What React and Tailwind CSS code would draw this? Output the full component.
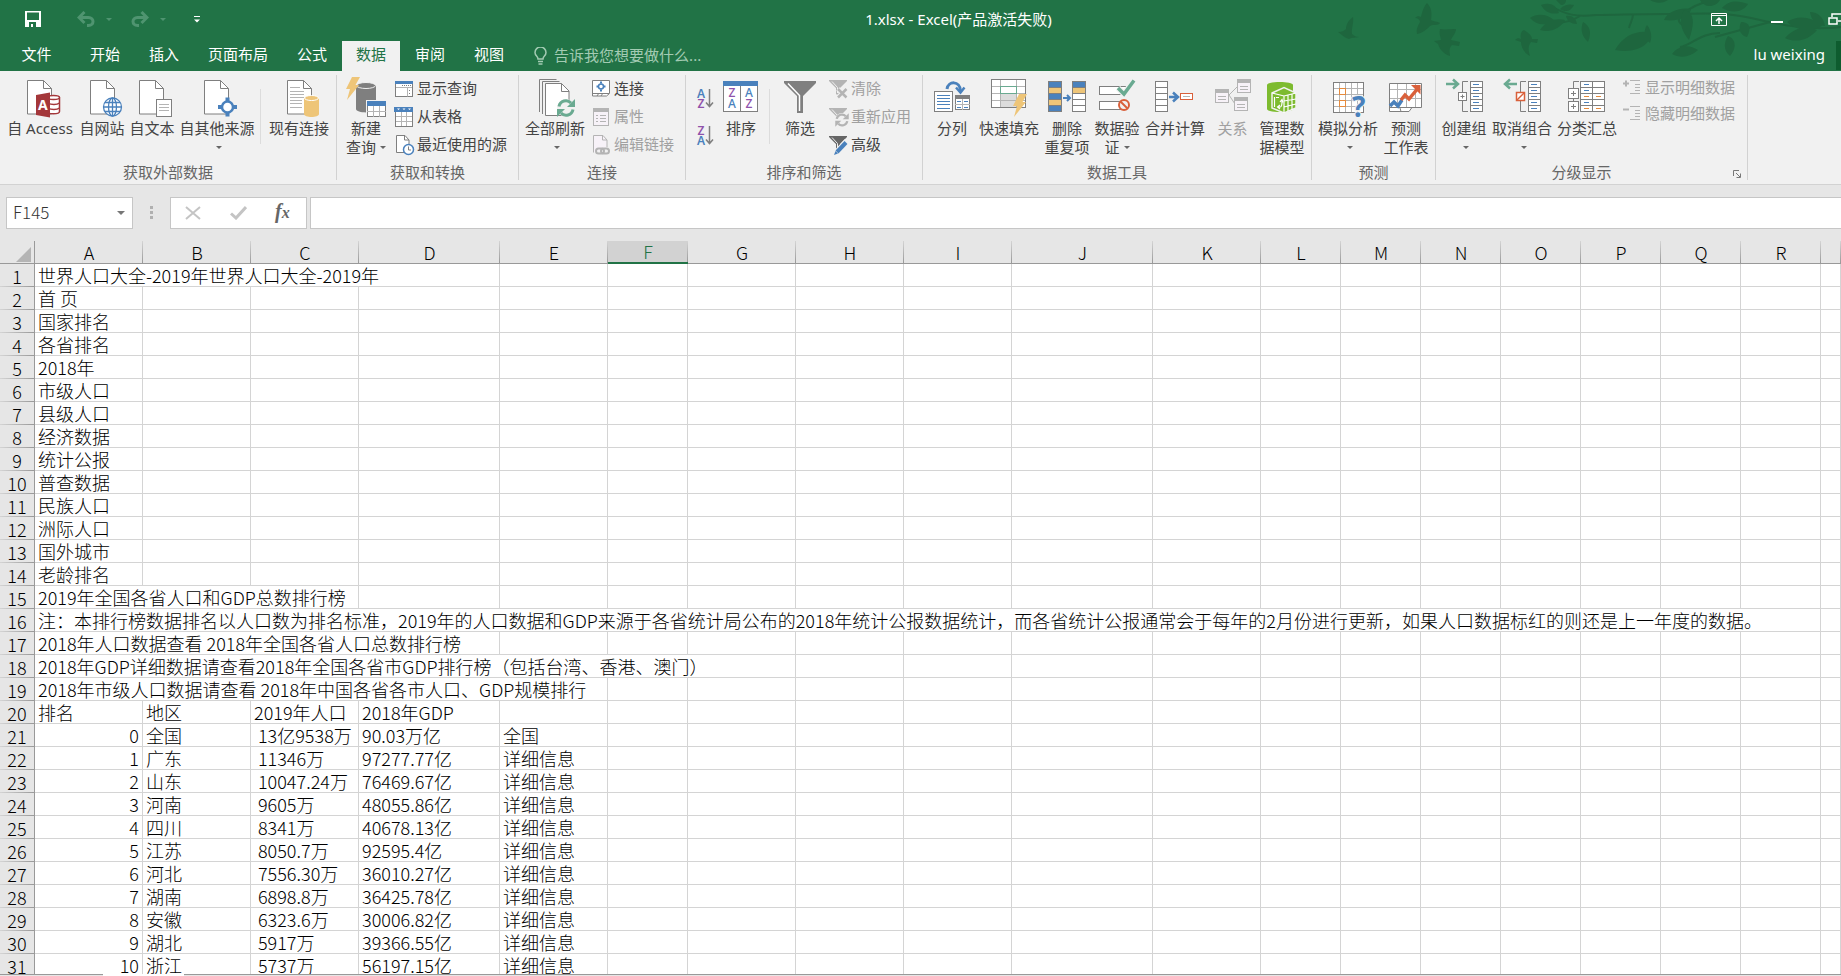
import { clsx } from "clsx";

const GRAY = "#7f7f7f";
const BLUE = "#4a81bc";
const YELLOW = "#eec578";
const RED = "#d9603b";
const TEAL = "#6aaa91";
const PALE = "#b4b4b4";

/* ---------- shared icon parts ---------- */

function Big({ children }) {
	return (
		<svg width="40" height="38" viewBox="0 0 40 38" className="overflow-visible" fill="none" stroke={GRAY} aria-hidden="true">
			{children}
		</svg>
	);
}

function Small({ children, color = GRAY }) {
	return (
		<svg width="18" height="20" viewBox="0 0 18 20" className="shrink-0 overflow-visible" fill="none" stroke={color} aria-hidden="true">
			{children}
		</svg>
	);
}

function Page({ x = 7, y = 1 }) {
	return (
		<g transform={`translate(${x} ${y})`}>
			<path d="M.5.5h16l8 8v25.500H.5z" fill="#fff" />
			<path d="M16.500.5v8h8" />
		</g>
	);
}

function Bolt({ x, y }) {
	return (
		<path
			transform={`translate(${x} ${y})`}
			d="M6 0h8L9.500 8H13L1 23l3-11H0z"
			fill={YELLOW}
			stroke="none"
		/>
	);
}

function Refresh({ x, y, s = 1, color = TEAL }) {
	return (
		<g transform={`translate(${x} ${y}) scale(${s})`} stroke={color} strokeWidth="3">
			<path d="M-7-1.500A7 7 0 0 1 5-5" />
			<path d="M7 1.500A7 7 0 0 1-5 5" />
			<path d="M9-9v8H1z" fill={color} stroke="none" />
			<path d="M-9 9V1h8z" fill={color} stroke="none" />
		</g>
	);
}

function Rows({ x, y = 2.5, w, fills }) {
	return fills.map((fill, i) => (
		<rect key={i} x={x} y={y + i * 6} width={w} height="6" fill={fill} strokeWidth="1" />
	));
}

function Arrow({ x, y, color = BLUE, flip = false, w = 10 }) {
	return (
		<path
			transform={`translate(${x} ${y})${flip ? " scale(-1 1)" : ""}`}
			d={`M0 0H${w - 1}M${w - 6}-4.500L${w - 1} 0l-5 4.500`}
			stroke={color}
			strokeWidth="2.500"
		/>
	);
}

function Caret({ className }) {
	return (
		<svg width="6" height="3" viewBox="0 0 6 3" className={clsx("inline-block", className)} aria-hidden="true">
			<path d="M0 0h6L3 3z" fill="currentColor" />
		</svg>
	);
}

/* ---------- large ribbon icons ---------- */

const AccessIcon = () => (
	<Big>
		<Page />
		<path d="M27 18.500v14c0 3 12.500 3 12.500 0v-14" fill="#fff" stroke="#a4373a" strokeWidth="1.500" />
		<ellipse cx="33.500" cy="18.500" rx="6" ry="2" fill="#fff" stroke="#a4373a" strokeWidth="1.500" />
		<path d="M28 24c3 2 9 2 11.500 0M28 29c3 2 9 2 11.500 0" stroke="#a4373a" strokeWidth="1.500" />
		<path d="M16 16l14-2.500v25L16 36z" fill="#a4373a" stroke="none" />
		<text x="18" y="31" fontSize="14" fontWeight="700" fontFamily="Noto Sans" fill="#fff" stroke="none">A</text>
	</Big>
);

const WebIcon = () => (
	<Big>
		<Page x={8} />
		<g stroke={BLUE} strokeWidth="1.300">
			<circle cx="30.500" cy="28" r="9" fill="#fff" />
			<ellipse cx="30.500" cy="28" rx="4" ry="9" />
			<path d="M30.500 19v18M21.500 28h18M23 23.500h15M23 32.500h15" />
		</g>
	</Big>
);

const TextIcon = () => (
	<Big>
		<Page />
		<rect x="24.500" y="20.500" width="15" height="17" fill="#fff" />
		<path d="M27 25.500h10M27 28.500h10M27 31.500h10" stroke={PALE} />
	</Big>
);

const SourcesIcon = () => (
	<Big>
		<Page />
		<path d="M30.500 18.500v19M21 28h19" stroke={BLUE} strokeWidth="4" />
		<circle cx="30.500" cy="28" r="5.500" fill="#fff" stroke={BLUE} strokeWidth="2.500" />
	</Big>
);

const ConnectionsIcon = () => (
	<Big>
		<Page x={8} />
		<path d="M11 8.500h10M11 12.500h14M11 15.500h14M11 18.500h14M11 21.500h12M11 24.500h12M11 28.500h12" stroke={PALE} />
		<path d="M25 19v16c0 4 15 4 15 0V19z" fill={YELLOW} stroke="none" />
		<ellipse cx="32.500" cy="19" rx="7" ry="2.500" fill={YELLOW} stroke="#fff" />
	</Big>
);

const NewQueryIcon = () => (
	<Big>
		<path d="M10 6v24c0 4.500 20 4.500 20 0V6z" fill={GRAY} stroke="none" />
		<ellipse cx="20" cy="6.500" rx="9.500" ry="3" fill={GRAY} stroke="#f1f1f1" />
		<Bolt x={0} y={-2} />
		<rect x="20" y="21" width="21" height="18" fill="#f1f1f1" stroke="none" />
		<rect x="21.500" y="22.500" width="18" height="15" fill="#fff" />
		<rect x="21" y="22" width="19" height="5" fill={BLUE} stroke="none" />
		<path d="M27.500 27v11M33.500 27v11M21 32.500h19" stroke={PALE} />
	</Big>
);

const RefreshAllIcon = () => (
	<Big>
		<path d="M4.500 33V.5h17M7.500 35V2.500h17" />
		<path d="M10.500 4.500h16l7.500 7.500v24.500H10.500z" fill="#fff" />
		<path d="M26.500 4.500v8H34" />
		<circle cx="31" cy="29" r="9" fill="#f1f1f1" stroke="none" />
		<Refresh x={31} y={29} />
	</Big>
);

const SortIcon = () => (
	<Big>
		<rect x="2.500" y="2.500" width="34" height="30" fill="#fff" />
		<rect x="2" y="2" width="35" height="5" fill={BLUE} stroke="none" />
		<path d="M19.500 7v26" />
		<g fontSize="12" fontWeight="500" fontFamily="Noto Sans" stroke="none" textAnchor="middle">
			<text x="11" y="18" fill="#8f52ab">Z</text>
			<text x="11" y="29" fill={BLUE}>A</text>
			<text x="28" y="18" fill={BLUE}>A</text>
			<text x="28" y="29" fill="#8f52ab">Z</text>
		</g>
	</Big>
);

const FilterIcon = () => (
	<Big>
		<path d="M4 2h32v2L23 17v17h-6V17L4 4z" fill={GRAY} stroke="none" />
		<path d="M8 4.500l11.500 12V32" stroke="#fff" strokeWidth="1.500" />
	</Big>
);

const ColumnsIcon = () => (
	<Big>
		<rect x="2.500" y="12.500" width="18" height="20" fill="#fff" />
		<path d="M5 16.500h13M5 19.500h13M5 22.500h13M5 25.500h13M5 29.500h13" stroke={BLUE} />
		<rect x="23.500" y="16.500" width="14" height="14" fill="#fff" />
		<rect x="23" y="16" width="15" height="4" fill={GRAY} stroke="none" />
		<path d="M30.500 20v11M23 25.500h15" stroke={PALE} />
		<path d="M25 22.500h4M32 22.500h4M25 28.500h4M32 28.500h4" stroke={BLUE} />
		<path d="M15 10c1-8 13-9 13.500 2" stroke={BLUE} strokeWidth="3" />
		<path d="M24 8.500l4.500 5 4-5" stroke={BLUE} strokeWidth="2.500" />
	</Big>
);

const FlashFillIcon = () => (
	<Big>
		<rect x="2.500" y=".5" width="34" height="28" fill="#fff" />
		<rect x="12" y="15" width="15" height="13" fill="#dcdcdc" stroke="none" />
		<path d="M11.500 1v27M27.500 1v27M3 7.500h33M3 14.500h33M3 21.500h33" stroke={PALE} />
		<rect x="11.500" y="7.500" width="16" height="7" fill="#fff" stroke={TEAL} />
		<Bolt x={24} y={15} />
	</Big>
);

const DedupeIcon = () => (
	<Big>
		<Rows x={1.5} w={13} fills={[BLUE, YELLOW, BLUE, YELLOW, BLUE]} />
		<Rows x={25.5} w={13} fills={[BLUE, YELLOW, "#fff", "#fff", "#fff"]} />
		<path d="M16 19h7M20 16l3 3-3 3" stroke={BLUE} strokeWidth="2" />
	</Big>
);

const ValidateIcon = () => (
	<Big>
		<rect x="2.500" y="7.500" width="27" height="8" fill="#fff" />
		<rect x="2.500" y="22.500" width="27" height="8" fill="#fff" />
		<path d="M21 9l6 6L37 1.500" stroke="#f1f1f1" strokeWidth="6" />
		<path d="M21 9l6 6L37 1.500" stroke={TEAL} strokeWidth="3.500" />
		<circle cx="27" cy="26" r="5" fill="#f1f1f1" stroke={RED} strokeWidth="2" />
		<path d="M23.500 22.500l7 7" stroke={RED} strokeWidth="2" />
	</Big>
);

const ConsolidateIcon = () => (
	<Big>
		<Rows x={0.5} w={12} fills={["#fff", "#fff", "#fff", "#fff", "#fff"]} />
		<Arrow x={14} y={18} />
		<rect x="25.500" y="14.500" width="12" height="6" fill="#fff" stroke={RED} />
		<path d="M28 17.500h7" stroke={PALE} />
	</Big>
);

function PaleTable({ x, y }) {
	return (
		<g transform={`translate(${x} ${y})`} stroke={PALE}>
			<rect x=".5" y=".5" width="13" height="13" fill="#f7f2f8" />
			<path d="M0 2h14" strokeWidth="4" />
			<path d="M3 7.500h8M3 10.500h8" />
		</g>
	);
}

const RelationsIcon = () => (
	<Big>
		<path d="M16 16l9-9M16 16l6 9" stroke={PALE} />
		<PaleTable x={2} y={10} />
		<PaleTable x={24} y={0} />
		<PaleTable x={21} y={18} />
	</Big>
);

const DataModelIcon = () => (
	<Big>
		<path d="M5 6c0-4 26-4 26 0v24c0 4-26 4-26 0z" fill="#7dbb2f" stroke="none" />
		<path d="M10 14l12-5.500L34 14v15l-12 5-12-5z" fill="#7dbb2f" stroke="#f1f1f1" strokeWidth="1.500" />
		<path d="M22 17v17M10 14l12 3 12-3M26 16v16M30 15v16M22 22l12-2M22 28l12-3" stroke="#fff" strokeWidth="1.200" />
		<path d="M12.500 18v10M16 28c4 1 4-2 4-6M18 23l2-2.500 1 3M18 26l-2.500 2 2.500 2M14 18.500h3" stroke="#fff" strokeWidth="1.200" />
	</Big>
);

const WhatIfIcon = () => (
	<Big>
		<rect x="5.500" y="3.500" width="30" height="30" fill="#fff" />
		<path d="M11.500 4v29M17.500 4v29M23.500 4v29M29.500 4v29M6 9.500h29M6 15.500h29M6 21.500h29M6 27.500h29" stroke={PALE} />
		<rect x="11.500" y="9.500" width="6" height="6" fill="#fff" stroke="#e58a3c" />
		<rect x="11.500" y="21.500" width="6" height="6" fill="#fff" stroke="#e58a3c" />
		<text x="24" y="38" fontSize="28" fontWeight="700" fontFamily="Noto Sans" fill={BLUE} stroke="#f1f1f1" strokeWidth="2" paintOrder="stroke">?</text>
	</Big>
);

const ForecastIcon = () => (
	<Big>
		<path d="M3.500 4.500h32v24H26l-3 4H3.500z" fill="#fff" />
		<path d="M11.500 5v23M20.500 5v23M29.500 5v23M4 10.500h31M4 19.500h31" stroke={PALE} />
		<path d="M4 28.500h22M14 29l1 3.500h8" />
		<path d="M4 27l4-4 4 4 4-6" stroke={BLUE} strokeWidth="3.500" />
		<path d="M15 21l4-5 4 4L33 8" stroke={RED} strokeWidth="3.500" />
		<path d="M25 6h9.500v9.500z" fill={RED} stroke="none" />
	</Big>
);

function OutlineTable({ x, cols = 1 }) {
	return (
		<>
			<Rows x={x} w={12} fills={["#fff", "#fff", "#fff", "#fff", "#fff"]} />
			{cols === 2 && <Rows x={x + 12} w={12} fills={["#fff", "#fff", "#fff", "#fff", "#fff"]} />}
		</>
	);
}

const dashes = "M29 5.500h6M29 11.500h6M29 17.500h6M29 23.500h6M29 29.500h6";

const GroupIcon = () => (
	<Big>
		<path d="M24 2.500h-5.500v30H24" />
		<rect x="14.500" y="13.500" width="8" height="8" fill="#fff" />
		<path d="M16.500 17.500h4M18.500 15.500v4" />
		<OutlineTable x={26.5} />
		<path d={dashes} stroke={BLUE} />
		<Arrow x={2} y={5} w={13} color={TEAL} />
	</Big>
);

const UngroupIcon = () => (
	<Big>
		<path d="M24 2.500h-5.500v30H24" />
		<rect x="14.500" y="13.500" width="8" height="8" fill="#fff" stroke={RED} strokeWidth="1.500" />
		<path d="M15 21l7-7" stroke={RED} strokeWidth="1.500" />
		<OutlineTable x={26.5} />
		<path d={dashes} stroke={BLUE} />
		<Arrow x={15} y={5} w={13} color={TEAL} flip />
	</Big>
);

const SubtotalIcon = () => (
	<Big>
		<path d="M12 2.500H6.500V10M6.500 19v4" />
		<rect x="1.500" y="9.500" width="10" height="10" fill="#fff" />
		<rect x="1.500" y="22.500" width="10" height="10" fill="#fff" />
		<path d="M4 14.500h5M6.500 12v5M4 27.500h5M6.500 25v5" />
		<OutlineTable x={13.5} cols={2} />
		<path d="M17 5.500h5M17 11.500h5M17 23.500h5" stroke={BLUE} />
		<path d="M17 17.500h5M29 17.500h5M17 29.500h5M29 29.500h5" stroke="#e58a3c" />
	</Big>
);

/* ---------- small ribbon icons ---------- */

const ShowQueriesIcon = () => (
	<Small>
		<rect x=".5" y="2.500" width="17" height="15" fill="#fff" />
		<rect x="0" y="2" width="18" height="3" fill={BLUE} stroke="none" />
		<path d="M12.500 8.500v9M1 8.500h16" stroke={PALE} />
		<path d="M14 11.500h2M14 14.500h2M7 6.500h9" strokeDasharray="1 1" />
	</Small>
);

const FromTableIcon = () => (
	<Small>
		<rect x=".5" y=".5" width="17" height="19" fill="#fff" />
		<rect x="-1" y="0" width="19" height="5" fill={BLUE} stroke="none" />
		<path d="M2 1.500h3L3.500 3zM7.500 1.500h3L9 3zM13 1.500h3L14.500 3z" fill="#fff" stroke="none" />
		<path d="M6.500 5v14M11.500 5v14M1 9.500h16M1 14.500h16" stroke={PALE} />
	</Small>
);

const RecentIcon = () => (
	<Small>
		<path d="M1.500.5H10l4 4.500v12.500H1.500z" fill="#fff" />
		<path d="M9.500.5V5H14" />
		<circle cx="13.500" cy="14.500" r="5" fill="#fff" stroke={BLUE} strokeWidth="1.500" />
		<path d="M13.500 11.500v3.500H16" stroke={GRAY} />
	</Small>
);

const LinkIcon = () => (
	<Small>
		<path d="M.5 1.500h17v13l-3 2.500H.5z" fill="#fff" />
		<path d="M1 14.500h16M5 17l2-3M9 17l2-3" />
		<circle cx="9" cy="7.500" r="2.500" stroke={BLUE} strokeWidth="1.500" />
		<path d="M9 2.500v2M9 10.500v2M4.500 7.500h2M11.500 7.500h2" stroke={BLUE} strokeWidth="2" />
	</Small>
);

const PropsIcon = () => (
	<Small color={PALE}>
		<rect x="1.500" y="1.500" width="15" height="17" fill="#f7f2f8" />
		<path d="M1 3h16" strokeWidth="4" />
		<path d="M4 8.500h2M8 8.500h6M4 11.500h2M8 11.500h6M4 14.500h2M8 14.500h6" />
	</Small>
);

const EditLinksIcon = () => (
	<Small color={PALE}>
		<path d="M1.500 17.500V.5H11l4 4.500v7" fill="#f7f2f8" />
		<path d="M10.500.5V5H15" />
		<rect x="4" y="13.500" width="8" height="5" rx="2.500" strokeWidth="2" />
		<rect x="9" y="13.500" width="8" height="5" rx="2.500" strokeWidth="2" />
	</Small>
);

function MiniFunnel({ color }) {
	return (
		<>
			<path d="M0 1h18v1l-7 7v9l-4-3V9L0 2z" fill={color} stroke="none" />
			<path d="M3 2.500l5.500 6V14" stroke="#f1f1f1" />
		</>
	);
}

const ClearIcon = () => (
	<Small color={PALE}>
		<MiniFunnel color={PALE} />
		<path d="M9 10l8.500 8.500M17.500 10L9 18.500" stroke="#f1f1f1" strokeWidth="5" />
		<path d="M9 10l8.500 8.500M17.500 10L9 18.500" strokeWidth="2.500" />
	</Small>
);

const ReapplyIcon = () => (
	<Small>
		<MiniFunnel color={PALE} />
		<circle cx="13" cy="13" r="7" fill="#f1f1f1" stroke="none" />
		<Refresh x={13} y={13} s={0.75} color={PALE} />
	</Small>
);

const AdvancedIcon = () => (
	<Small>
		<MiniFunnel color="#666" />
		<path d="M6 19L18 6" stroke="#f1f1f1" strokeWidth="6" />
		<path d="M8 17L17 7.500" stroke={BLUE} strokeWidth="4" />
		<path d="M5 20l1.500-4 2.500 2.500z" fill={BLUE} stroke="none" />
	</Small>
);

function DetailIcon({ plus }) {
	return (
		<Small color={PALE}>
			<path d="M0 5.500h6" strokeWidth="2" />
			{plus && <path d="M3 2.500v6" strokeWidth="2" />}
			<path d="M7 2.500h10M12 6.500h5M12 9.500h5M12 12.500h5M7 15.500h10" />
		</Small>
	);
}

function SortOrder({ first, second, label }) {
	return (
		<button type="button" aria-label={label} className="flex h-[37px] w-[22px] items-center justify-center">
			<svg width="20" height="22" viewBox="0 0 20 22" className="overflow-visible" aria-hidden="true">
				<g fontSize="12" fontWeight="600" fontFamily="Noto Sans" textAnchor="middle">
					<text x="6" y="10" fill={first === "A" ? BLUE : "#8f52ab"}>{first}</text>
					<text x="6" y="20" fill={second === "A" ? BLUE : "#8f52ab"}>{second}</text>
				</g>
				<path d="M14.500 1v17M11 14.500l3.500 4 3.500-4" fill="none" stroke={GRAY} strokeWidth="1.500" />
			</svg>
		</button>
	);
}

/* ---------- ribbon building blocks ---------- */

function BigButton({ icon, lines, caret, width, disabled }) {
	return (
		<button
			type="button"
			disabled={disabled}
			className={clsx(
				"flex shrink-0 flex-col items-center pt-1 leading-[19px] whitespace-nowrap",
				width,
				disabled ? "text-[#a0a0a0]" : "text-[#444]",
			)}
		>
			<span className="mb-0.5 block">{icon}</span>
			{lines.map((line, i) => (
				<span key={line} className="flex items-center gap-1">
					{line}
					{caret === "inline" && i === lines.length - 1 && <Caret className="text-[#666]" />}
				</span>
			))}
			{caret === "below" && <Caret className="mt-2 ml-1 text-[#666]" />}
		</button>
	);
}

function SmallButton({ icon, text, disabled, height = "h-7" }) {
	return (
		<button
			type="button"
			disabled={disabled}
			className={clsx(
				"flex items-center gap-1 whitespace-nowrap",
				height,
				disabled ? "text-[#a0a0a0]" : "text-[#444]",
			)}
		>
			{icon}
			<span className="pb-0.5">{text}</span>
		</button>
	);
}

function Group({ title, width, inset, children, launcher }) {
	return (
		<section aria-label={title} className={clsx("flex h-[105px] shrink-0 flex-col border-r border-[#d2d2d2]", width)}>
			<div className={clsx("flex flex-1 items-start", inset)}>{children}</div>
			<div className={clsx("relative h-4 text-center leading-4 text-[#666]", launcher && "pr-5")}>
				{title}
				{launcher && (
					<button type="button" aria-label={`${title}设置`} className="absolute right-1.5 bottom-0.5">
						<svg width="8" height="8" viewBox="0 0 8 8" fill="none" stroke="#777">
							<path d="M.5 6V.5H6M3 3l4 4M7.500 3.500v4h-4" />
						</svg>
					</button>
				)}
			</div>
		</section>
	);
}

const Divider = () => <div className="mx-[3px] mt-3.5 h-[55px] w-px shrink-0 bg-[#dcdcdc]" />;

function Ribbon() {
	return (
		<div className="flex h-[114px] shrink-0 overflow-hidden border-b border-[#d2d2d2] bg-[#f1f1f1] pt-1">
			<Group title="获取外部数据" width="w-[337px]" inset="pl-[3px]">
				<BigButton icon={<AccessIcon />} lines={["自 Access"]} width="w-[74px]" />
				<BigButton icon={<WebIcon />} lines={["自网站"]} width="w-[50px]" />
				<BigButton icon={<TextIcon />} lines={["自文本"]} width="w-[50px]" />
				<BigButton icon={<SourcesIcon />} lines={["自其他来源"]} caret="below" width="w-[80px]" />
				<Divider />
				<BigButton icon={<ConnectionsIcon />} lines={["现有连接"]} width="w-[70px]" />
			</Group>
			<Group title="获取和转换" width="w-[182px]" inset="pl-1.5">
				<BigButton icon={<NewQueryIcon />} lines={["新建", "查询"]} caret="inline" width="w-[46px]" />
				<div className="ml-1.5">
					<SmallButton icon={<ShowQueriesIcon />} text="显示查询" />
					<SmallButton icon={<FromTableIcon />} text="从表格" />
					<SmallButton icon={<RecentIcon />} text="最近使用的源" />
				</div>
			</Group>
			<Group title="连接" width="w-[167px]" inset="pl-[3px]">
				<BigButton icon={<RefreshAllIcon />} lines={["全部刷新"]} caret="below" width="w-[66px]" />
				<div className="ml-1">
					<SmallButton icon={<LinkIcon />} text="连接" />
					<SmallButton icon={<PropsIcon />} text="属性" disabled />
					<SmallButton icon={<EditLinksIcon />} text="编辑链接" disabled />
				</div>
			</Group>
			<Group title="排序和筛选" width="w-[237px]" inset="pl-2">
				<div className="pt-[5px]">
					<SortOrder first="A" second="Z" label="升序" />
					<SortOrder first="Z" second="A" label="降序" />
				</div>
				<BigButton icon={<SortIcon />} lines={["排序"]} width="w-[50px]" />
				<Divider />
				<BigButton icon={<FilterIcon />} lines={["筛选"]} width="w-[54px]" />
				<div className="ml-0.5">
					<SmallButton icon={<ClearIcon />} text="清除" disabled />
					<SmallButton icon={<ReapplyIcon />} text="重新应用" disabled />
					<SmallButton icon={<AdvancedIcon />} text="高级" />
				</div>
			</Group>
			<Group title="数据工具" width="w-[389px]" inset="pl-[5px]">
				<BigButton icon={<ColumnsIcon />} lines={["分列"]} width="w-[48px]" />
				<BigButton icon={<FlashFillIcon />} lines={["快速填充"]} width="w-[66px]" />
				<BigButton icon={<DedupeIcon />} lines={["删除", "重复项"]} width="w-[50px]" />
				<BigButton icon={<ValidateIcon />} lines={["数据验", "证"]} caret="inline" width="w-[50px]" />
				<BigButton icon={<ConsolidateIcon />} lines={["合并计算"]} width="w-[66px]" />
				<BigButton icon={<RelationsIcon />} lines={["关系"]} width="w-[49px]" disabled />
				<BigButton icon={<DataModelIcon />} lines={["管理数", "据模型"]} width="w-[50px]" />
			</Group>
			<Group title="预测" width="w-[124px]" inset="pl-[3px]">
				<BigButton icon={<WhatIfIcon />} lines={["模拟分析"]} caret="below" width="w-[66px]" />
				<BigButton icon={<ForecastIcon />} lines={["预测", "工作表"]} width="w-[50px]" />
			</Group>
			<Group title="分级显示" width="w-[312px]" inset="pl-[3px]" launcher>
				<BigButton icon={<GroupIcon />} lines={["创建组"]} caret="below" width="w-[50px]" />
				<BigButton icon={<UngroupIcon />} lines={["取消组合"]} caret="below" width="w-[66px]" />
				<BigButton icon={<SubtotalIcon />} lines={["分类汇总"]} width="w-[64px]" />
				<div className="ml-1">
					<SmallButton icon={<DetailIcon plus />} text="显示明细数据" height="h-[26px]" disabled />
					<SmallButton icon={<DetailIcon />} text="隐藏明细数据" height="h-[26px]" disabled />
				</div>
			</Group>
		</div>
	);
}

/* ---------- title bar and tabs ---------- */

function HeaderArt() {
	return (
		<svg width="521" height="60" viewBox="1320 0 521 60" className="pointer-events-none absolute top-0 right-0" fill="#1e663e" stroke="none" aria-hidden="true">
			{/* birds */}
			<path d="M1338 32c4 0 6-1 8-3 0-5 3-9 7-12 1 6-2 12-1 17 2 2 4 3 7 3-3 1-7 0-10 2-4-1-7-4-11-7z" />
			<path d="M1415 18c2-2 4-2 6-1 1-5 3-11 6-14 5 5 5 11 4 17 3 2 6 1 9 3-2 3-7 1-10 3-3 3-7 7-13 8-1-5 1-8 3-12 0-2-2-4-5-4z" />
			<path d="M1434 41l7-1c-1-4-2-8-1-11 5 1 11 0 16 0 0 4-4 8-5 11l9 2-1 4-7-1c-4 4-2 8-2 11-6-2-10-6-12-12z" />
			<path d="M1515 40c2-2 4-2 6-1-1-4 0-8 3-9 5 3 8 6 8 9l6 0-1 4-6-1c-4 5-2 10-1 14-6-3-9-9-9-14z" />
			{/* branches */}
			<g fill="none" stroke="#1e663e" strokeWidth="2">
				<path d="M1841 27c-30 4-60-2-90-9s-55-4-85-4-50 1-70 1c-20 2-30 0-45-9" />
				<path d="M1690 28c-20-6-10-14 5-22l15-6M1633 14c0 6-3 9-4 14M1720 33c-20 0-28 12-40 14M1580 16c-10 6-20 8-30 6M1770 22l-55 15" />
			</g>
			{/* leaves */}
			<path d="M1530 18c7-5 17-4 24 2-7 6-17 6-24-2zM1540 30c7-10 16-12 25-10-5 9-15 13-25 10zM1541 5c9-3 15 0 18 8-8 2-14-1-18-8zM1560 9c5-5 10-5 14-4-3 6-8 8-14 4zM1566 16c6-1 10 2 11 8-6 0-10-3-11-8zM1583 22c7 4 9 10 5 20-6-6-8-12-5-20zM1556 0h10c0 3-2 5-5 5z" />
			<path d="M1615 50c8-14 20-20 35-18 2 12-12 22-35 18zM1664 20c4-9 17-13 27-11-1 8-13 13-27 11zM1650 0h18c-4 3-12 4-18 0zM1647 25c5 6 5 13 3 18-6-4-7-12-3-18z" />
			<path d="M1684 10c9 2 12 10 5 30-8-10-11-20-5-30zM1672 54c7-9 17-10 26-4-8 7-17 9-26 4zM1728 36c8 3 9 12 2 20-6-5-7-12-2-20zM1700 0h20c-4 7-15 9-20 0zM1722 8c8-9 17-7 26-4-5 8-15 10-26 4zM1741 22c8 0 11 5 6 15-7-2-9-8-6-15z" />
			<path d="M1787 22c10-7 24-6 35 4-13 6-25 5-35-4zM1785 38c8-9 19-13 32-8-7 9-20 14-32 8zM1810 12c8 0 14 6 15 14-9-1-14-6-15-14z" />
		</svg>
	);
}

function Undo({ flip }) {
	return (
		<svg width="18" height="16" viewBox="0 0 18 16" className={clsx(flip && "-scale-x-100")} fill="none" stroke="#4f9470" strokeWidth="3" aria-hidden="true">
			<path d="M2 6.500h9.500c6 0 6 8 0 8H10" />
			<path d="M7.500 1L2 6.500 7.500 12" />
		</svg>
	);
}

function TitleBar() {
	return (
		<div className="relative flex h-[41px] items-start">
			<div className="flex h-[38px] w-[207px] items-center pl-[25px]">
				<button type="button" aria-label="保存">
					<svg width="16" height="16" viewBox="0 0 16 16" aria-hidden="true">
						<path d="M0 0h16v16H0zM2 1.500V9h12V1.500zM4 11v5h2v-3h2v3h3v-5z" fill="#fff" fillRule="evenodd" />
					</svg>
				</button>
				<button type="button" aria-label="撤消" className="ml-9 flex items-center gap-[11px] text-[#4f9470]">
					<Undo />
					<Caret />
				</button>
				<button type="button" aria-label="恢复" className="ml-[19px] flex items-center gap-[11px] text-[#4f9470]">
					<Undo flip />
					<Caret />
				</button>
				<button type="button" aria-label="自定义快速访问工具栏" className="ml-7">
					<svg width="6" height="7" viewBox="0 0 6 7" fill="#fff" aria-hidden="true">
						<path d="M0 0h6v1H0zM0 3.500h6L3 6.500z" />
					</svg>
				</button>
			</div>
			<h1 className="flex-1 text-center leading-[38px] text-white">1.xlsx - Excel(产品激活失败)</h1>
			<div className="flex h-[38px] w-[131px] items-center overflow-hidden">
				<button type="button" aria-label="功能区显示选项" className="shrink-0">
					<svg width="18" height="13" viewBox="0 0 18 13" fill="none" stroke="#fff" aria-hidden="true">
						<path d="M1.500.5h15v12h-15zM1 2.500h16" />
						<path d="M9 11V5.500M6 8l3-3 3 3" strokeWidth="1.500" />
					</svg>
				</button>
				<button type="button" aria-label="最小化" className="ml-[43px] shrink-0 pt-1.5">
					<svg width="12" height="2" viewBox="0 0 12 2" aria-hidden="true">
						<path d="M0 0h12v2H0z" fill="#fff" />
					</svg>
				</button>
				<button type="button" aria-label="还原" className="ml-[45px] shrink-0">
					<svg width="13" height="12" viewBox="0 0 13 12" fill="none" stroke="#fff" strokeWidth="1.500" aria-hidden="true">
						<path d="M4 4V1h11v7H10M1 5h8v6H1z" />
					</svg>
				</button>
			</div>
		</div>
	);
}

const tabs = ["开始", "插入", "页面布局", "公式", "数据", "审阅", "视图"];

function TabBar() {
	return (
		<div className="relative flex h-[30px] items-stretch text-white">
			<nav className="flex gap-px">
				<button type="button" className="mr-0.5 w-[73px] pb-[3px]">文件</button>
				{tabs.map((tab) => (
					<button
						type="button"
						key={tab}
						className={clsx("px-3.5 pb-[3px]", tab === "数据" && "bg-[#f1f1f1] text-[#217346]")}
					>
						{tab}
					</button>
				))}
			</nav>
			<label className="ml-4 flex items-center gap-[7px]">
				<svg width="13" height="18" viewBox="0 0 13 18" fill="none" stroke="#a3cbb3" strokeWidth="1.500" aria-hidden="true">
					<path d="M4 12c0-3-3-3-3-6.500a5.500 5.500 0 0 1 11 0C12 9 9 9 9 12z" />
					<path d="M4 14.500h5M4.500 17h4" />
				</svg>
				<input
					type="text"
					aria-label="操作说明搜索"
					placeholder="告诉我您想要做什么..."
					className="w-44 bg-transparent pb-0.5 outline-none placeholder:text-[#a3cbb3]"
				/>
			</label>
			<a href="#account" className="ml-auto self-center pr-[11px] pb-[3px]">lu weixing</a>
			<div className="h-[29px] w-[5px] bg-[#0e5c2f]" />
		</div>
	);
}

/* ---------- formula bar ---------- */

function FormulaBar() {
	return (
		<div className="flex h-14 shrink-0 items-start bg-[#e6e6e6] pt-3 pl-1.5">
			<div className="flex h-8 w-[127px] items-center border border-[#c6c6c6] bg-white pr-[7px] pl-1.5">
				<input
					type="text"
					aria-label="名称框"
					defaultValue="F145"
					className="w-full min-w-0 bg-transparent pb-0.5 font-['Noto_Sans_CJK_SC',sans-serif] text-[17px] font-light text-[#333] outline-none"
				/>
				<button type="button" aria-label="展开名称框" className="flex text-[#777]">
					<svg width="8" height="4" viewBox="0 0 8 4" aria-hidden="true">
						<path d="M0 0h8L4 4z" fill="currentColor" />
					</svg>
				</button>
			</div>
			<svg width="3" height="14" viewBox="0 0 3 14" className="mx-[17px] mt-[9px] shrink-0" fill="#b0b0b0" aria-hidden="true">
				<path d="M0 0h3v3H0zM0 5h3v3H0zM0 10h3v3H0z" />
			</svg>
			<div className="flex h-8 w-[137px] shrink-0 items-center border border-[#c6c6c6] bg-white pl-3.5">
				<button type="button" aria-label="取消">
					<svg width="16" height="14" viewBox="0 0 16 14" fill="none" stroke="#c4c4c4" strokeWidth="2" aria-hidden="true">
						<path d="M1 1l14 12M15 1L1 13" />
					</svg>
				</button>
				<button type="button" aria-label="输入" className="ml-[29px]">
					<svg width="17" height="14" viewBox="0 0 17 14" fill="none" stroke="#c4c4c4" strokeWidth="3" aria-hidden="true">
						<path d="M1 7.500l5 4.500L16 1" />
					</svg>
				</button>
				<button type="button" aria-label="插入函数" className="ml-7 pb-0.5 font-['Liberation_Serif',serif] text-xl leading-6 font-bold text-[#666] italic">
					f<span className="text-base">x</span>
				</button>
			</div>
			<input type="text" aria-label="编辑栏" className="ml-[3px] h-8 min-w-0 flex-1 border border-r-0 border-[#c6c6c6] bg-white px-2 outline-none" />
		</div>
	);
}

/* ---------- sheet ---------- */

const columns = [
	["A", "w-[108px]"],
	["B", "w-[108px]"],
	["C", "w-[108px]"],
	["D", "w-[141px]"],
	["E", "w-[108px]"],
	["F", "w-[80px]"],
	["G", "w-[108px]"],
	["H", "w-[108px]"],
	["I", "w-[108px]"],
	["J", "w-[141px]"],
	["K", "w-[108px]"],
	["L", "w-[80px]"],
	["M", "w-[80px]"],
	["N", "w-[80px]"],
	["O", "w-[80px]"],
	["P", "w-[80px]"],
	["Q", "w-[80px]"],
	["R", "w-[80px]"],
	["", ""],
];

// span = how many columns a long text runs over
const rows = [
	{ cells: ["世界人口大全-2019年世界人口大全-2019年"], span: 4 },
	{ cells: ["首 页"] },
	{ cells: ["国家排名"] },
	{ cells: ["各省排名"] },
	{ cells: ["2018年"] },
	{ cells: ["市级人口"] },
	{ cells: ["县级人口"] },
	{ cells: ["经济数据"] },
	{ cells: ["统计公报"] },
	{ cells: ["普查数据"] },
	{ cells: ["民族人口"] },
	{ cells: ["洲际人口"] },
	{ cells: ["国外城市"] },
	{ cells: ["老龄排名"] },
	{ cells: ["2019年全国各省人口和GDP总数排行榜"], span: 3 },
	{
		cells: [
			"注：本排行榜数据排名以人口数为排名标准，2019年的人口数据和GDP来源于各省统计局公布的2018年统计公报数据统计，而各省统计公报通常会于每年的2月份进行更新，如果人口数据标红的则还是上一年度的数据。",
		],
		span: 18,
	},
	{ cells: ["2018年人口数据查看 2018年全国各省人口总数排行榜"], span: 4 },
	{ cells: ["2018年GDP详细数据请查看2018年全国各省市GDP排行榜（包括台湾、香港、澳门）"], span: 7 },
	{ cells: ["2018年市级人口数据请查看 2018年中国各省各市人口、GDP规模排行"], span: 5 },
	{ cells: ["排名", "地区", "2019年人口", "2018年GDP"] },
	{ cells: [0, "全国", " 13亿9538万", "90.03万亿", "全国"] },
	{ cells: [1, "广东", " 11346万", "97277.77亿", "详细信息"] },
	{ cells: [2, "山东", " 10047.24万", "76469.67亿", "详细信息"] },
	{ cells: [3, "河南", " 9605万", "48055.86亿", "详细信息"] },
	{ cells: [4, "四川", " 8341万", "40678.13亿", "详细信息"] },
	{ cells: [5, "江苏", " 8050.7万", "92595.4亿", "详细信息"] },
	{ cells: [6, "河北", " 7556.30万", "36010.27亿", "详细信息"] },
	{ cells: [7, "湖南", " 6898.8万", "36425.78亿", "详细信息"] },
	{ cells: [8, "安徽", " 6323.6万", "30006.82亿", "详细信息"] },
	{ cells: [9, "湖北", " 5917万", "39366.55亿", "详细信息"] },
	{ cells: [10, "浙江", " 5737万", "56197.15亿", "详细信息"] },
];

function SheetRow({ row, number }) {
	const { cells, span = 1 } = row;
	const empty = columns.length - cells.length - (span - 1);

	return (
		<tr className="h-[23px]">
			<th
				scope="row"
				className="border-r border-[#999] bg-[#e6e6e6] bg-[linear-gradient(to_right,#d4d4d4,#999)] bg-[length:100%_1px] bg-bottom bg-no-repeat p-0 text-center font-light"
			>
				{number}
			</th>
			{cells.map((cell, i) => (
				<td
					key={i}
					colSpan={i === 0 ? span : 1}
					className={clsx(
						"border-r border-b border-[#d4d4d4] px-[3px] py-0 whitespace-pre",
						typeof cell === "number" && "text-right",
					)}
				>
					{cell}
				</td>
			))}
			{Array.from({ length: empty }, (_, i) => (
				<td key={`e${i}`} className="border-r border-b border-[#d4d4d4] p-0" />
			))}
		</tr>
	);
}

function Sheet() {
	return (
		<div className="min-h-0 flex-1 overflow-hidden bg-white">
			<table className="w-full min-w-[1822px] table-fixed border-separate border-spacing-0 font-['Noto_Sans_CJK_SC',sans-serif] text-lg leading-[22px] font-light text-black">
				<colgroup>
					<col className="w-[35px]" />
					{columns.map(([name, width]) => (
						<col key={name} className={width} />
					))}
				</colgroup>
				<thead>
					<tr className="h-[23px] leading-[21px]">
						<th className="border-r border-b border-[#999] bg-[#e6e6e6] p-0">
							<svg width="15" height="15" viewBox="0 0 15 15" className="mt-1 mr-[3px] ml-auto" aria-hidden="true">
								<path d="M15 0v15H0z" fill="#b4b4b4" />
							</svg>
						</th>
						{columns.map(([name]) => (
							<th
								key={name}
								scope="col"
								className={clsx(
									"bg-[linear-gradient(to_bottom,#d4d4d4,#999)] bg-[length:1px_100%] bg-right bg-no-repeat p-0 text-center font-light",
									name === "F"
										? "border-b-2 border-[#217346] bg-[#d2d2d2] text-[#217346]"
										: "border-b border-[#999] bg-[#e6e6e6]",
								)}
							>
								{name}
							</th>
						))}
					</tr>
				</thead>
				<tbody>
					{rows.map((row, i) => (
						<SheetRow key={i} row={row} number={i + 1} />
					))}
				</tbody>
			</table>
		</div>
	);
}

export default function App() {
	return (
		<div className="flex h-screen flex-col overflow-hidden bg-[#e6e6e6] font-['Noto_Sans','Noto_Sans_CJK_SC',sans-serif] text-[15px]">
			<header className="relative shrink-0 bg-[#217346]">
				<HeaderArt />
				<TitleBar />
				<TabBar />
			</header>
			<Ribbon />
			<FormulaBar />
			<Sheet />
			{/* top edge of the sheet tab strip */}
			<div className="flex h-0.5 shrink-0">
				<div className="w-[103px] border-t border-[#999]" />
				<div className="w-[81px] bg-white" />
				<div className="flex-1 border-t border-[#999]" />
			</div>
		</div>
	);
}
